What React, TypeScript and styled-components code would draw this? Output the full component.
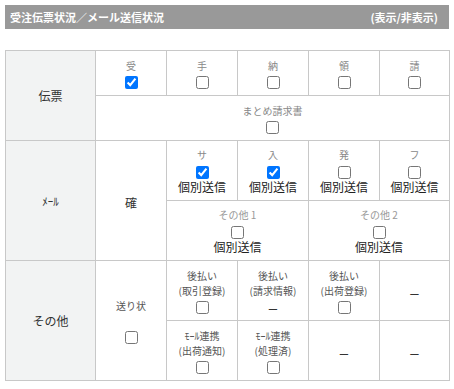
import styled, { createGlobalStyle } from 'styled-components';

const GlobalStyle = createGlobalStyle`
  body {
    margin: 0;
    background: #fff;
    font-family: 'Noto Sans CJK JP', 'Noto Sans', sans-serif;
  }
`;

const Page = styled.div`
  padding: 5px;
  width: 444px;
`;

const HeaderBar = styled.div`
  display: flex;
  justify-content: space-between;
  align-items: center;
  height: 24px;
  padding: 0 11px 0 5px;
  background: #999;
  color: #fff;
  font-size: 11px;
  font-weight: bold;
`;

const Toggle = styled.span`
  cursor: pointer;
`;

const Table = styled.table`
  margin-top: 21px;
  width: 444px;
  border-collapse: collapse;
  table-layout: fixed;
  border: 1px solid #c8c8c8;
`;

const Row = styled.tr<{ $h: number }>`
  height: ${(p) => p.$h}px;
`;

const HeadCell = styled.th<{ $small?: boolean }>`
  border: 1px solid #c8c8c8;
  background: #f2f3f3;
  color: #333;
  font-weight: normal;
  font-size: ${(p) => (p.$small ? '11px' : '12px')};
  text-align: center;
  vertical-align: middle;
`;

const Cell = styled.td`
  border: 1px solid #c8c8c8;
  padding: 0;
  text-align: center;
  vertical-align: middle;
  color: #333;
`;

const Stack = styled.div`
  display: flex;
  flex-direction: column;
  align-items: center;
`;

const Label = styled.span<{ $tone?: 'light' | 'mid' | 'dark' }>`
  font-size: 10px;
  line-height: 15px;
  color: ${(p) => (p.$tone === 'light' ? '#999' : p.$tone === 'dark' ? '#555' : '#888')};
  white-space: nowrap;
`;

const Check = styled.input.attrs({ type: 'checkbox' })<{ $gap?: number }>`
  width: 13px;
  height: 13px;
  margin: ${(p) => p.$gap ?? 3}px 0 0;
  display: block;
`;

const SendText = styled.span`
  font-size: 12px;
  line-height: 16px;
  color: #222;
`;

const BigText = styled.span`
  font-size: 12px;
  color: #333;
`;

const Dash = styled.span<{ $gap?: number }>`
  font-family: 'Liberation Sans', sans-serif;
  font-size: 15px;
  line-height: 13px;
  margin-top: ${(p) => p.$gap ?? 0}px;
  color: #333;
`;

const Col = styled.col<{ $w: number }>`
  width: ${(p) => p.$w}px;
`;

type SlipProps = { label: string; checked?: boolean };

const SlipCell = ({ label, checked }: SlipProps) => (
  <Cell>
    <Stack>
      <Label>{label}</Label>
      <Check defaultChecked={checked} />
    </Stack>
  </Cell>
);

type MailProps = { label: string; checked?: boolean; span?: number; tone?: 'light' | 'mid' };

const MailCell = ({ label, checked, span, tone }: MailProps) => (
  <Cell colSpan={span}>
    <Stack>
      <Label $tone={tone}>{label}</Label>
      <Check defaultChecked={checked} $gap={4} />
      <SendText>個別送信</SendText>
    </Stack>
  </Cell>
);

type OtherProps = { lines: string[]; box?: boolean };

const OtherCell = ({ lines, box = true }: OtherProps) => (
  <Cell>
    <Stack>
      {lines.map((l) => (
        <Label key={l} $tone="dark">
          {l}
        </Label>
      ))}
      {box ? <Check /> : <Dash $gap={3}>–</Dash>}
    </Stack>
  </Cell>
);

const EmptyCell = () => (
  <Cell>
    <Dash>–</Dash>
  </Cell>
);

export default function App() {
  return (
    <Page>
      <GlobalStyle />
      <HeaderBar>
        <span>受注伝票状況／メール送信状況</span>
        <Toggle>(表示/非表示)</Toggle>
      </HeaderBar>
      <Table>
        <colgroup>
          <Col $w={90} />
          <Col $w={71} />
          <Col $w={71} />
          <Col $w={71} />
          <Col $w={71} />
          <Col $w={70} />
        </colgroup>
        <tbody>
          <Row $h={45}>
            <HeadCell rowSpan={2}>伝票</HeadCell>
            <SlipCell label="受" checked />
            <SlipCell label="手" />
            <SlipCell label="納" />
            <SlipCell label="領" />
            <SlipCell label="請" />
          </Row>
          <Row $h={45}>
            <Cell colSpan={5}>
              <Stack>
                <Label>まとめ請求書</Label>
                <Check />
              </Stack>
            </Cell>
          </Row>
          <Row $h={60}>
            <HeadCell rowSpan={2} $small>
              ﾒｰﾙ
            </HeadCell>
            <Cell rowSpan={2}>
              <BigText>確</BigText>
            </Cell>
            <MailCell label="サ" checked />
            <MailCell label="入" checked />
            <MailCell label="発" />
            <MailCell label="フ" />
          </Row>
          <Row $h={60}>
            <MailCell label="その他 1" span={2} tone="light" />
            <MailCell label="その他 2" span={2} tone="light" />
          </Row>
          <Row $h={60}>
            <HeadCell rowSpan={2}>その他</HeadCell>
            <Cell rowSpan={2}>
              <Stack>
                <Label $tone="dark">送り状</Label>
                <Check $gap={18} />
              </Stack>
            </Cell>
            <OtherCell lines={['後払い', '(取引登録)']} />
            <OtherCell lines={['後払い', '(請求情報)']} box={false} />
            <OtherCell lines={['後払い', '(出荷登録)']} />
            <EmptyCell />
          </Row>
          <Row $h={60}>
            <OtherCell lines={['ﾓｰﾙ連携', '(出荷通知)']} />
            <OtherCell lines={['ﾓｰﾙ連携', '(処理済)']} />
            <EmptyCell />
            <EmptyCell />
          </Row>
        </tbody>
      </Table>
    </Page>
  );
}
